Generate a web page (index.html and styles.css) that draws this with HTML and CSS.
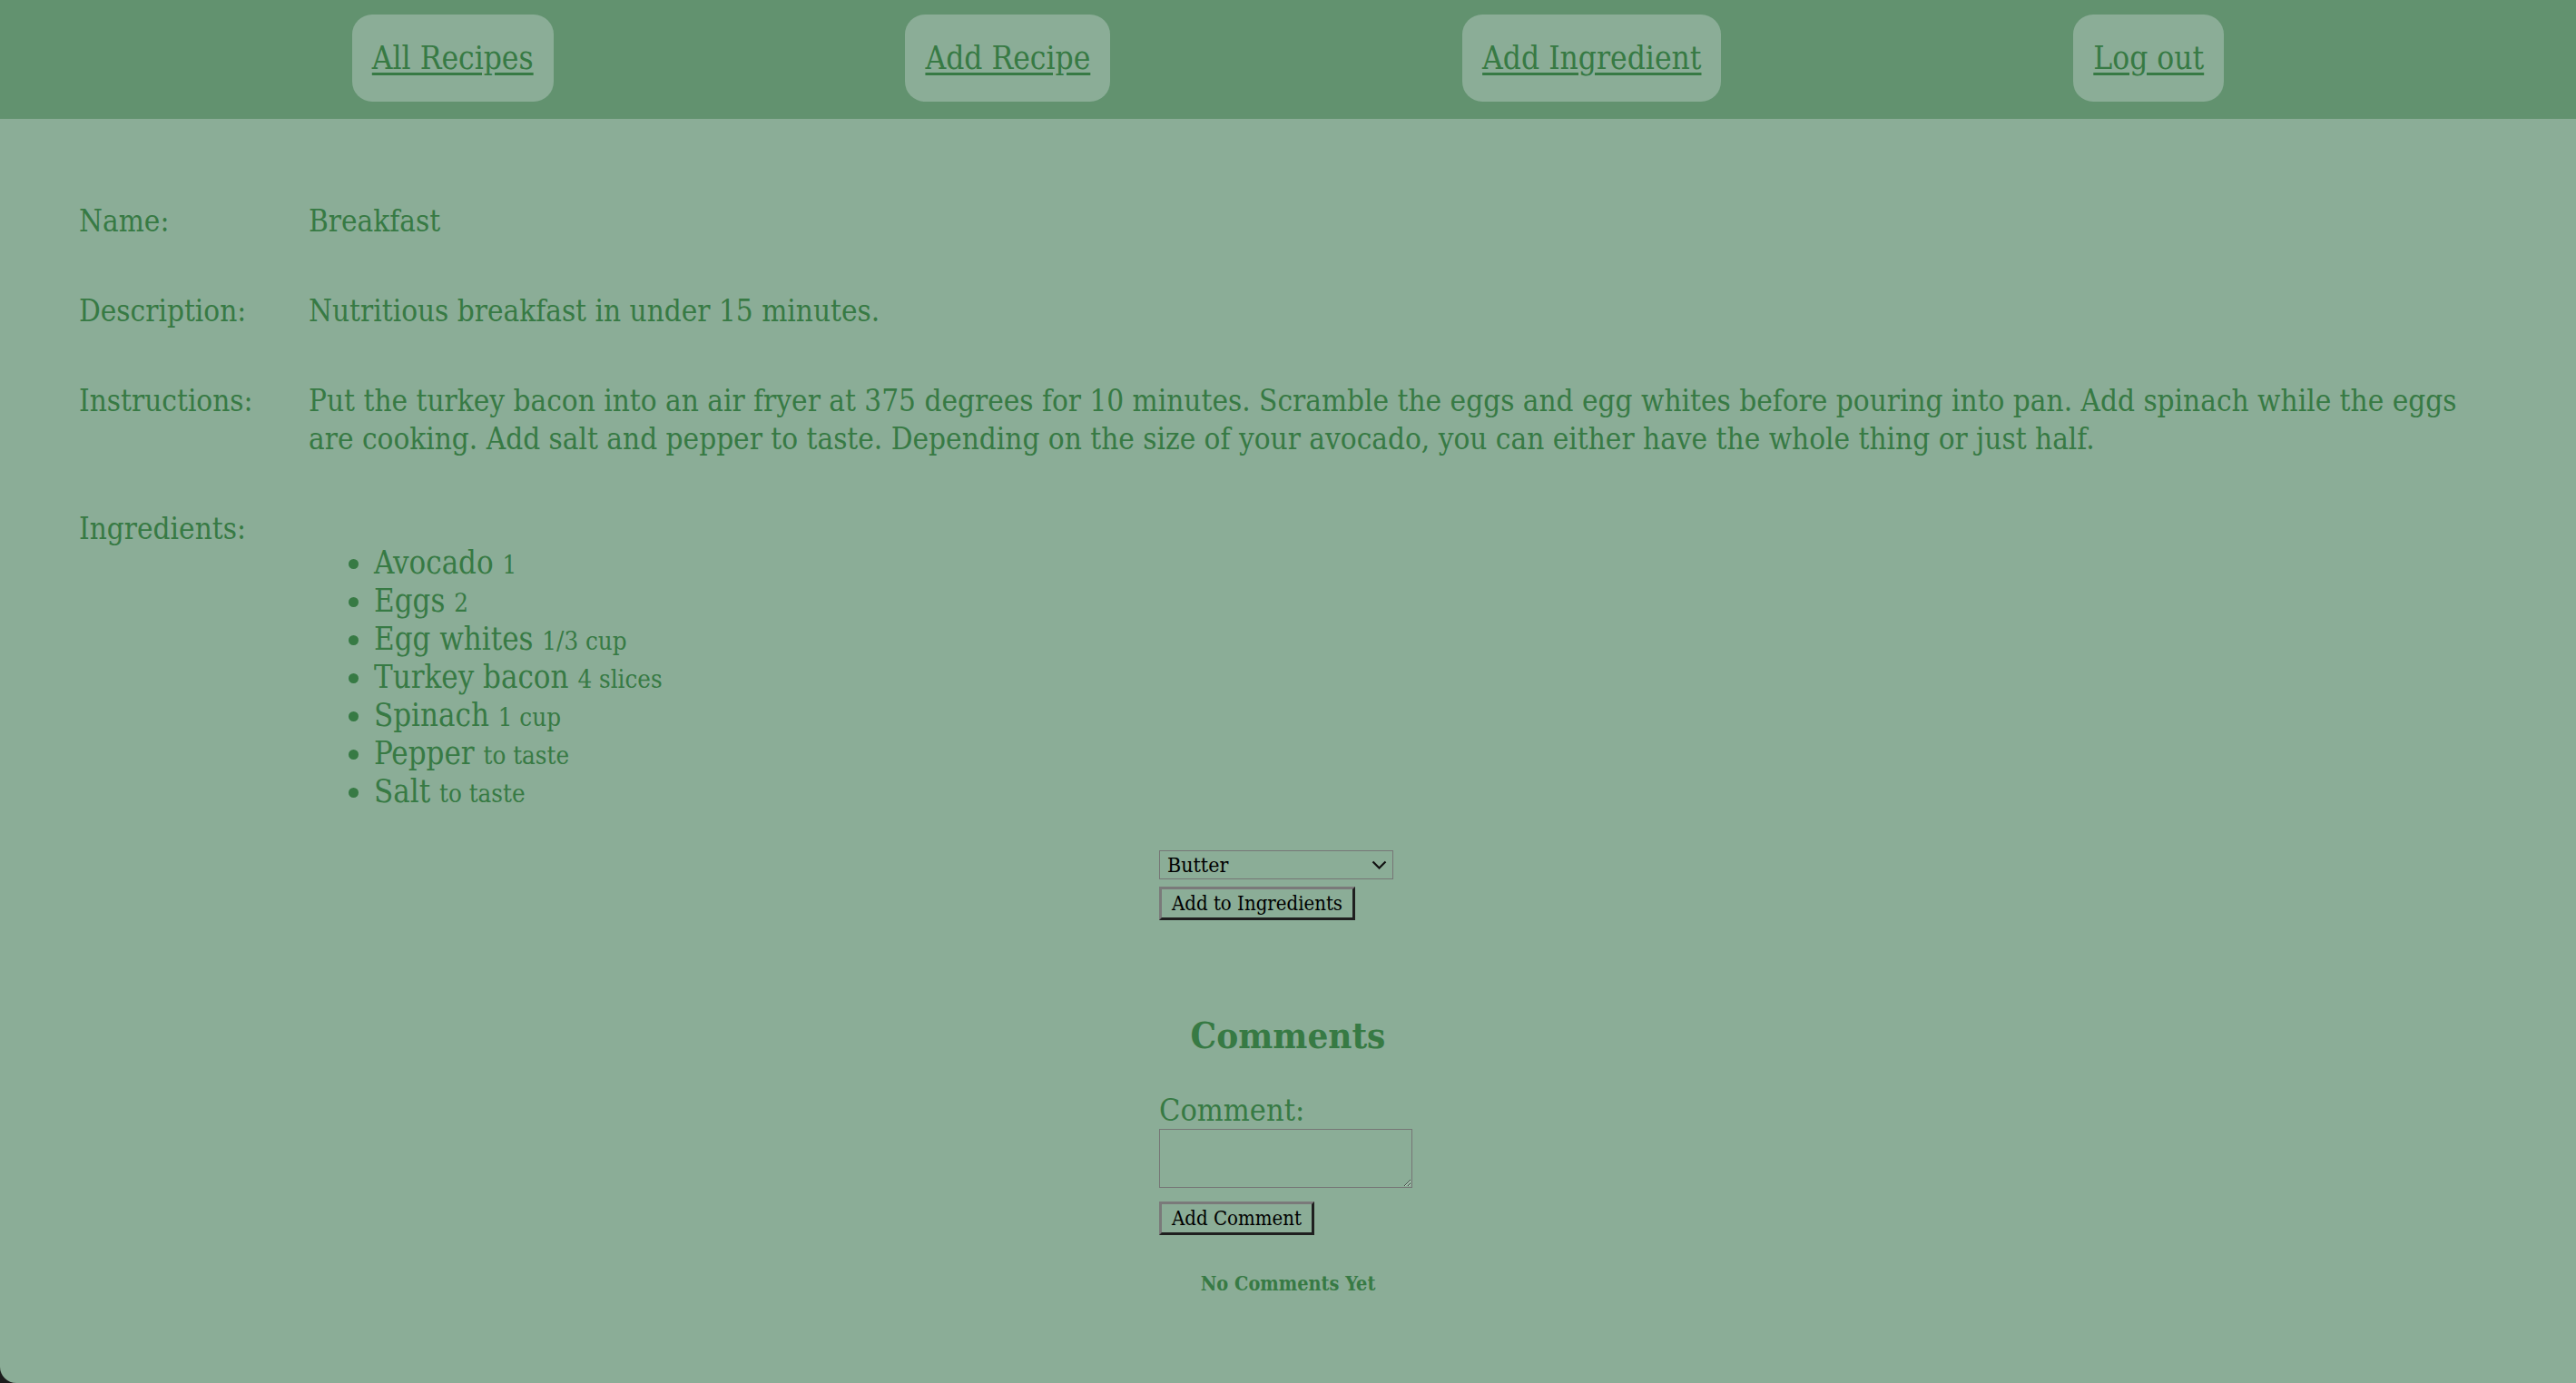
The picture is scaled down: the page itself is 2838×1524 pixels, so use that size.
FILE: index.html
```html
<!DOCTYPE html>
<html lang="en">
<head>
<meta charset="utf-8">
<title>Breakfast</title>
<link rel="stylesheet" href="styles.css">
</head>
<body>
<nav class="topnav">
  <a class="navlink" href="#">All Recipes</a>
  <a class="navlink" href="#">Add Recipe</a>
  <a class="navlink" href="#">Add Ingredient</a>
  <a class="navlink" href="#">Log out</a>
</nav>
<main class="recipe">
  <section class="details">
    <div class="label">Name:</div>
    <div class="value">Breakfast</div>
    <div class="label">Description:</div>
    <div class="value">Nutritious breakfast in under 15 minutes.</div>
    <div class="label">Instructions:</div>
    <div class="value">Put the turkey bacon into an air fryer at 375 degrees for 10 minutes. Scramble the eggs and egg whites before pouring into pan. Add spinach while the eggs are cooking. Add salt and pepper to taste. Depending on the size of your avocado, you can either have the whole thing or just half.</div>
    <div class="label">Ingredients:</div>
    <div class="value">
      <ul class="ingredients">
        <li>Avocado <span class="qty">1</span></li>
        <li>Eggs <span class="qty">2</span></li>
        <li>Egg whites <span class="qty">1/3 cup</span></li>
        <li>Turkey bacon <span class="qty">4 slices</span></li>
        <li>Spinach <span class="qty">1 cup</span></li>
        <li>Pepper <span class="qty">to taste</span></li>
        <li>Salt <span class="qty">to taste</span></li>
      </ul>
    </div>
  </section>
  <div class="extras">
    <form class="side-form add-ingredient">
      <div class="select-wrap">
        <select class="picker">
          <option>Butter</option>
          <option>Avocado</option>
          <option>Eggs</option>
        </select>
        <svg class="chevron" width="17" height="10" viewBox="0 0 17 10"><path d="M1.5 1.5 L8.5 8.5 L15.5 1.5" fill="none" stroke="#111" stroke-width="2.2"/></svg>
      </div>
      <button type="button" class="plain-btn">Add to Ingredients</button>
    </form>
    <h2 class="comments-title">Comments</h2>
    <form class="side-form comment-form">
      <label class="comment-label" for="comment">Comment:</label>
      <textarea id="comment" class="comment-box"></textarea>
      <button type="button" class="plain-btn">Add Comment</button>
    </form>
    <p class="no-comments">No Comments Yet</p>
  </div>
</main>
</body>
</html>
```

FILE: styles.css
```css
html {
  background: #1d1d1d;
}

body {
  margin: 0;
  min-height: 100vh;
  background: #8bad97;
  color: #377a44;
  font-family: "DejaVu Serif", "Liberation Serif", serif;
  font-stretch: condensed;
  border-bottom-left-radius: 18px;
}

.topnav {
  display: flex;
  justify-content: space-evenly;
  align-items: flex-start;
  background: #62926f;
  padding: 16px 0 19px;
}

.navlink {
  display: block;
  background: #8bad97;
  color: #377a44;
  font-size: 35px;
  line-height: 42px;
  padding: 27px 22px;
  border-radius: 22px;
  text-decoration: underline;
  text-decoration-thickness: 3px;
  text-underline-offset: 4px;
}

.recipe {
  padding: 92px 87px 40px;
}

.details {
  display: grid;
  grid-template-columns: 253px 1fr;
  row-gap: 57px;
  font-size: 33px;
  line-height: 42px;
}

.ingredients {
  margin: 37px 0 0;
  padding-left: 72px;
  font-size: 34.5px;
  line-height: 42px;
}

.qty {
  font-size: 27.5px;
  line-height: 1;
}

.extras {
  display: flex;
  flex-direction: column;
  align-items: center;
  margin-top: 44px;
}

.side-form {
  width: 284px;
  display: flex;
  flex-direction: column;
  align-items: flex-start;
}

.select-wrap {
  position: relative;
  width: 258px;
  height: 32px;
}

.picker {
  appearance: none;
  -webkit-appearance: none;
  width: 258px;
  height: 32px;
  box-sizing: border-box;
  margin: 0;
  padding: 0 0 0 8px;
  border: 1px solid #767676;
  border-radius: 0;
  background: transparent;
  color: #000;
  font-family: inherit;
  font-stretch: inherit;
  font-size: 23px;
}

.chevron {
  position: absolute;
  right: 7px;
  top: 11px;
  pointer-events: none;
}

.plain-btn {
  margin: 8px 0 0;
  padding: 2px 11px;
  height: 37px;
  background: transparent;
  color: #000;
  font-family: inherit;
  font-stretch: inherit;
  font-size: 22px;
  line-height: 27px;
  border-style: solid;
  border-width: 3px;
  border-color: #7a7a7a #1f1f1f #1f1f1f #7a7a7a;
  border-radius: 0;
}

.comments-title {
  margin: 102px 0 0;
  font-size: 40px;
  line-height: 50px;
  font-weight: bold;
}

.comment-form {
  margin-top: 36px;
}

.comment-label {
  display: block;
  font-size: 34px;
  line-height: 42px;
}

.comment-box {
  display: block;
  width: 279px;
  height: 65px;
  box-sizing: border-box;
  margin: 0;
  background: transparent;
  border: 1px solid #767676;
  border-radius: 0;
}

.comment-form .plain-btn {
  margin-top: 15px;
}

.no-comments {
  margin: 40px 0 0;
  font-size: 21.5px;
  line-height: 28px;
  font-weight: bold;
}
```
